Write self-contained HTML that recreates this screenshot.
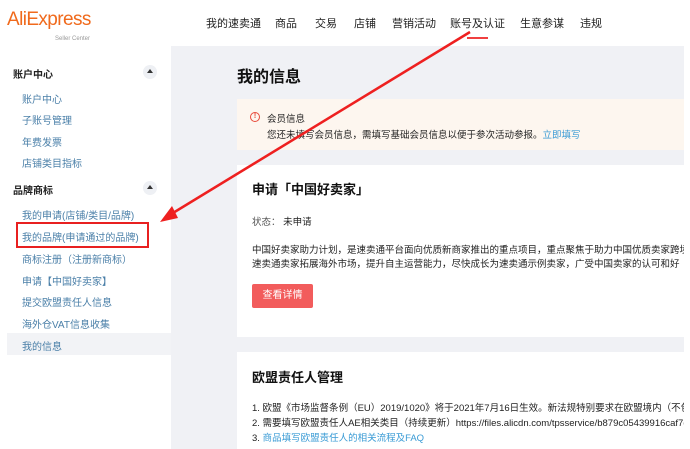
<!DOCTYPE html>
<html><head><meta charset="utf-8"><style>
*{margin:0;padding:0;box-sizing:border-box}
body{width:690px;height:449px;overflow:hidden;background:#fff;font-family:"Liberation Sans","Noto Sans CJK SC",sans-serif;position:relative;color:#333}
.a{position:absolute;white-space:nowrap}
.nav{top:15px;font-size:11px;color:#222}
.side{font-size:10px;color:#4a7fa8}
.h{font-size:10px;font-weight:bold;color:#222}
.car{width:14px;height:14px;border-radius:7px;background:#eef0f4}
.car:after{content:"";position:absolute;left:4px;top:4px;border-left:3px solid transparent;border-right:3px solid transparent;border-bottom:4px solid #333}
.p{font-size:9.5px;color:#222}
</style></head><body>
<div class="a" style="left:7px;top:9px;font-size:19px;color:#f06a1c;letter-spacing:-0.6px">AliExpress</div>
<div class="a" style="left:55px;top:36px;font-size:6px;color:#999">Seller Center</div>
<div class="a nav" style="left:206px">我的速卖通</div>
<div class="a nav" style="left:275px">商品</div>
<div class="a nav" style="left:315px">交易</div>
<div class="a nav" style="left:354px">店铺</div>
<div class="a nav" style="left:392px">营销活动</div>
<div class="a nav" style="left:450px">账号及认证</div>
<div class="a nav" style="left:520px">生意参谋</div>
<div class="a nav" style="left:580px">违规</div>
<div class="a" style="left:467px;top:37px;width:21px;height:2px;background:#f04040"></div>

<div class="a" style="left:7px;top:46px;width:164px;height:403px;background:#fff"></div>
<div class="a" style="left:171px;top:46px;width:513px;height:403px;background:#f0f1f5"></div>
<div class="a" style="left:0;top:46px;width:6px;height:403px;background:#fff"></div>

<div class="a h" style="left:13px;top:66px">账户中心</div>
<div class="a car" style="left:143px;top:65px"></div>
<div class="a side" style="left:22px;top:91px">账户中心</div>
<div class="a side" style="left:22px;top:112px">子账号管理</div>
<div class="a side" style="left:22px;top:134px">年费发票</div>
<div class="a side" style="left:22px;top:155px">店铺类目指标</div>
<div class="a h" style="left:13px;top:182px">品牌商标</div>
<div class="a car" style="left:143px;top:181px"></div>
<div class="a side" style="left:22px;top:207px">我的申请(店铺/类目/品牌)</div>
<div class="a side" style="left:22px;top:229px">我的品牌(申请通过的品牌)</div>
<div class="a" style="left:16px;top:222px;width:133px;height:26px;border:2px solid #e82020"></div>
<div class="a side" style="left:22px;top:251px">商标注册（注册新商标）</div>
<div class="a side" style="left:22px;top:273px">申请【中国好卖家】</div>
<div class="a side" style="left:22px;top:294px">提交欧盟责任人信息</div>
<div class="a side" style="left:22px;top:316px">海外仓VAT信息收集</div>
<div class="a" style="left:7px;top:333px;width:164px;height:22px;background:#f2f3f6"></div>
<div class="a side" style="left:22px;top:338px">我的信息</div>

<div class="a" style="left:237px;top:63px;font-size:16px;font-weight:bold;color:#111">我的信息</div>
<div class="a" style="left:237px;top:99px;width:447px;height:51px;background:#fdf6ef"></div>
<div class="a" style="left:250px;top:112px;width:10px;height:10px;border:1.5px solid #e84a3a;border-radius:50%;font-size:7px;color:#e84a3a;text-align:center;line-height:7px;font-weight:bold">!</div>
<div class="a p" style="left:267px;top:111px">会员信息</div>
<div class="a p" style="left:267px;top:127px">您还未填写会员信息，需填写基础会员信息以便于参次活动参报。<span style="color:#3a9bd5">立即填写</span></div>

<div class="a" style="left:237px;top:165px;width:447px;height:172px;background:#fff"></div>
<div class="a" style="left:252px;top:179px;font-size:13px;font-weight:bold;color:#111">申请「中国好卖家」</div>
<div class="a p" style="left:252px;top:214px"><span style="color:#555">状态：</span>&nbsp;未申请</div>
<div class="a p" style="left:252px;top:242px">中国好卖家助力计划，是速卖通平台面向优质新商家推出的重点项目，重点聚焦于助力中国优质卖家跨境</div>
<div class="a p" style="left:252px;top:256px">速卖通卖家拓展海外市场，提升自主运营能力，尽快成长为速卖通示例卖家，广受中国卖家的认可和好</div>
<div class="a" style="left:252px;top:284px;width:61px;height:24px;background:#f25c5c;border-radius:2px;color:#fff;font-size:10px;text-align:center;line-height:24px">查看详情</div>

<div class="a" style="left:237px;top:352px;width:447px;height:97px;background:#fff"></div>
<div class="a" style="left:252px;top:367px;font-size:13px;font-weight:bold;color:#111">欧盟责任人管理</div>
<div class="a p" style="left:252px;top:400px">1. 欧盟《市场监督条例（EU）2019/1020》将于2021年7月16日生效。新法规特别要求在欧盟境内（不包</div>
<div class="a p" style="left:252px;top:415px">2. 需要填写欧盟责任人AE相关类目（持续更新）https://files.alicdn.com/tpsservice/b879c05439916caf7d</div>
<div class="a p" style="left:252px;top:430px">3. <span style="color:#3a9bd5">商品填写欧盟责任人的相关流程及FAQ</span></div>
<div class="a" style="left:684px;top:46px;width:6px;height:403px;background:#fff"></div>

<svg class="a" style="left:0;top:0" width="690" height="449">
<line x1="470" y1="32" x2="168" y2="216" stroke="#ee2020" stroke-width="2.5"/>
<polygon points="160,222 172,206 178,218" fill="#ee2020"/>
</svg>
</body></html>
